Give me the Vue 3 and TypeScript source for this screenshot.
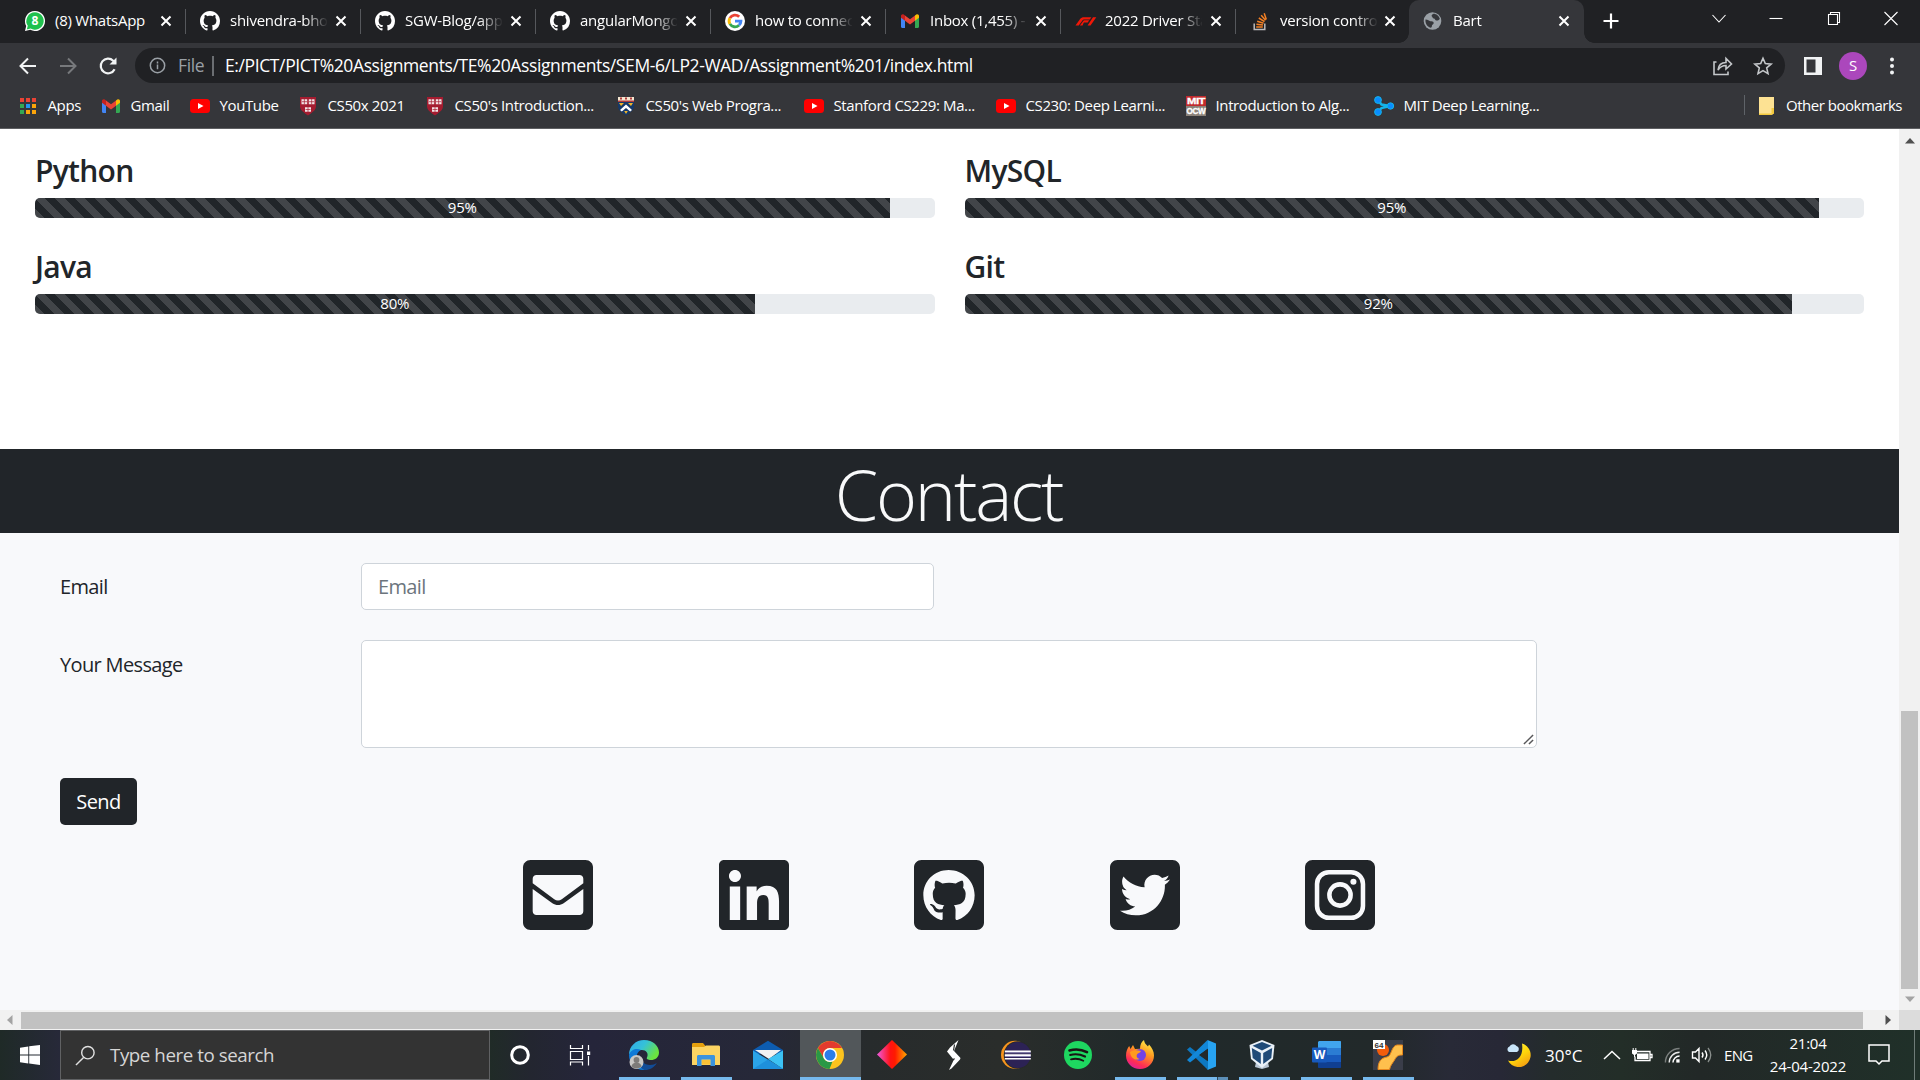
<script setup lang="ts">
interface Tab { icon: string; title: string; active?: boolean; last?: boolean }
interface Bookmark { icon: string; title: string; width: number }
interface Skill { name: string; value: number }
interface TaskApp { icon: string; running?: boolean; focused?: boolean; stacked?: boolean }

const github = '<path fill="#fff" transform="scale(1.25)" d="M8 0C3.58 0 0 3.58 0 8c0 3.54 2.29 6.53 5.47 7.59.4.07.55-.17.55-.38 0-.19-.01-.82-.01-1.49-2.01.37-2.53-.49-2.69-.94-.09-.23-.48-.94-.82-1.13-.28-.15-.68-.52-.01-.53.63-.01 1.08.58 1.23.82.72 1.21 1.87.87 2.33.66.07-.52.28-.87.51-1.07-1.78-.2-3.64-.89-3.64-3.95 0-.87.31-1.59.82-2.15-.08-.2-.36-1.02.08-2.12 0 0 .67-.21 2.2.82.64-.18 1.32-.27 2-.27s1.36.09 2 .27c1.53-1.04 2.2-.82 2.2-.82.44 1.1.16 1.92.08 2.12.51.56.82 1.27.82 2.15 0 3.07-1.87 3.75-3.65 3.95.29.25.54.73.54 1.48 0 1.07-.01 1.93-.01 2.2 0 .21.15.46.55.38A8.01 8.01 0 0 0 16 8c0-4.42-3.58-8-8-8z"/>'
const gmail = '<path fill="#4285f4" d="M1 5.5v10.3c0 .7.5 1.2 1.2 1.2H5V9z"/><path fill="#34a853" d="M19 5.500v10.300c0 .7-.5 1.200-1.200 1.200H15V9z"/><path fill="#ea4335" d="M5 4.500 10 8.300l5-3.800v5.200L10 13.400 5 9.700z"/><path fill="#fbbc04" d="M15 4.500l1.300-1C17.500 2.700 19 3.500 19 5v1.700l-4 3z"/><path fill="#c5221f" d="M5 4.500l-1.300-1C2.500 2.700 1 3.500 1 5v1.700l4 3z"/>'
const youtube = '<rect y="3" width="20" height="14" rx="3.500" fill="#f00"/><path fill="#fff" d="M8 7l5.500 3L8 13z"/>'
const shield = '<path fill="#a51c30" d="M2 1h16v9c0 4.500-4 6.500-8 9.500-4-3-8-5-8-9.500z"/><path fill="#f3e3e5" d="M3.500 3.200h5.700v5H3.500zM10.800 3.200h5.700v5h-5.700zM7 11.200h6v4.600H7z"/><path stroke="#a51c30" stroke-width=".7" d="M6.350 3v5.400M13.650 3v5.400M10 11v5M4 5.700h5M11 5.700h5M7.500 13.500h5"/>'

const icons: Record<string, string> = {
  github, gmail, youtube, shield,
  whatsapp: '<path fill="#fff" d="M10 0a10 10 0 1 1-4.700 18.800L0 20l1.200-5.100A10 10 0 0 1 10 0z"/><path fill="#1fc14e" d="M10 1.300a8.700 8.700 0 1 1-4.400 16.200l-3.800 1 1-3.700A8.700 8.700 0 0 1 10 1.300z"/><text x="10" y="14.300" text-anchor="middle" font-family="Open Sans, sans-serif" font-size="12" font-weight="700" fill="#fff">8</text>',
  google: '<circle cx="10" cy="10" r="10" fill="#fff"/><g fill="none" stroke-width="2.900"><path stroke="#ea4335" d="M4.900 7.100A5.900 5.900 0 0 1 14.200 5.800"/><path stroke="#fbbc05" d="M4.900 12.900a5.900 5.900 0 0 1 0-5.800"/><path stroke="#34a853" d="M14 14.300a5.900 5.900 0 0 1-9.100-1.400"/><path stroke="#4285f4" d="M10 10.100h5.900a5.900 5.900 0 0 1-1.900 4.200"/></g>',
  f1: '<path fill="#f01808" d="M.5 14.500l4.600-6.400C6 6.800 7.300 6.200 9 6.200h7.400l-1.600 2.300H9.400c-1 0-1.500.2-2 .9L3.700 14.500zM4.900 14.500l3-4.100c.6-.9 1.100-1.100 2.100-1.100h4.200l-1.500 2.100h-3c-.6 0-.8.1-1.100.5l-1 2.600zM12.600 14.500 18 6.200H21.300l-5.800 8.300z"/>',
  stack: '<path fill="none" stroke="#bcbbbb" stroke-width="1.500" d="M4.200 12.500v6h10.600v-6"/><g stroke="#f48024" stroke-width="1.500"><path d="M6.200 16h6.600M6.400 13.200l6.600.8M7.200 10.200l6.400 2M8.800 7l5.700 3.600M11.200 4.200l4.300 5M14.200 2.300l2.100 6.200"/></g>',
  globe: '<circle cx="9.500" cy="10" r="8.800" fill="#9aa0a6"/><path fill="#35363a" d="M10.500 2.800c3 0 5.500 2.300 6.300 5-.7 1.500-2.200 2.200-3.800 1.600-1-.4-.8-1.800-2.100-2-1.600-.1-1.200-1.400-2-1.900-.5-.5-.5-1.500 1.600-2.700zM2.500 8.600c2.700.2 3.300 1.400 4.900 1.700 1.300.1 2.900-.1 3.300 1.400.4 1.300-1.500 1.500-1.700 2.600-.1 1.300-.3 2.200-1.500 2.500C4.300 15.700 2 12.500 2.500 8.600z"/>',
  apps: '<path fill="#ea4335" d="M2 2h4v4H2zM8 2h4v4H8zM14 2h4v4h-4z"/><path fill="#34a853" d="M2 8h4v4H2zM2 14h4v4H2z"/><path fill="#2196f3" d="M8 8h4v4H8z"/><path fill="#fba40a" d="M14 8h4v4h-4zM8 14h4v4H8zM14 14h4v4h-4z"/>',
  crest: '<path fill="#15396b" d="M2 2h16v8c0 4.500-4 6.500-8 9.500C6 16.500 2 14.500 2 10z"/><path fill="#f5e6d0" d="M2 1h16v5H2z"/><path fill="#b03a3a" d="M2 4.500h16v1.400H2zM4 1.400h2v2H4zM9 1.400h2v2H9zM14 1.400h2v2h-2z"/><path fill="#f0b429" d="M3 7h5l-3 3zM12 7h5l-2 3zM8.200 15h3.600L10 18z"/><path fill="#fff" d="M10 8.500l6 5.500-1.800 1.600L10 12l-4.200 3.600L4 14z"/>',
  mit: '<path fill="#c12a2d" d="M0 0h20v10H0z"/><path fill="#8b8279" d="M0 10h20v10H0z"/><g font-family="Liberation Sans, sans-serif" font-weight="700" font-size="9" fill="#fff" stroke="#fff" stroke-width=".3"><text x="1" y="8.400" textLength="18" lengthAdjust="spacingAndGlyphs">MIT</text><text x=".5" y="18.300" textLength="19" lengthAdjust="spacingAndGlyphs">OCW</text></g>',
  nodes: '<path fill="none" stroke="#14b4e8" stroke-width="2.500" d="M4 4l3.500 4.500L16 10l-8.500 2L4 16"/><g fill="#0a8cff" stroke="#14b4e8"><circle cx="4" cy="4" r="3.400"/><circle cx="4" cy="16" r="3.400"/><circle cx="16.500" cy="10" r="3.200"/></g>',
  folder: '<path fill="#fde293" d="M2 1h15v12l-1 1v4.500H2z"/><path fill="#f3c93d" d="M17 12h-2.500v5.500L17 18zM2 17.500h13v1.500H2z"/>',

  edge: '<defs><linearGradient id="eg" x1="0" x2="1" y1="0" y2=".5"><stop offset="0" stop-color="#2fa8ee"/><stop offset=".5" stop-color="#35c1d8"/><stop offset="1" stop-color="#6be33e"/></linearGradient></defs><path fill="url(#eg)" d="M0 15C0 6 7 0 15 0c9 0 15 6 15 12.500 0 5-4 7.500-8 7.500-3 0-5-1-4-2.500 2-4-1-7.500-5-7.500C7 10 1 12 0 15z"/><path fill="#0f7ad8" d="M0 15C2 9 8 8 12 10c-3 1.500-4.500 4-4.500 7.500C7.500 23 12 27 17 29.800 7 31 0 24 0 15z"/><path fill="#124c96" d="M11 14.500c-1 6 4.500 10.500 10 10.500 3 0 5-.8 6.800-2C25 28 20 30.300 15.500 30 9 27.500 7 19 11 14.500z"/><circle cx="7.500" cy="22" r="7" fill="#c9c8c6"/><circle cx="7.500" cy="20" r="2.900" fill="#7d7b79"/><path fill="#7d7b79" d="M2.500 26.500a5 4 0 0 1 10 0 7 7 0 0 1-10 0z"/>',
  explorer: '<path fill="#e5a00d" d="M1 4.500C1 3.500 1.500 3 2.500 3H12l2.500 3H28v6H1z"/><path fill="#fcd462" d="M1 7h12l2-1.500h12.500c.8 0 1.500.5 1.500 1.500v18H1z"/><path fill="#3b93dd" d="M6 16.500c0-1 .7-1.500 1.500-1.500h15c.9 0 1.500.6 1.500 1.500V26h-4.500v-6.500h-9V26H6z"/><path fill="#fcc235" d="M11 20h8v4.500h-8z"/>',
  mail: '<path fill="#0d5cb0" d="M0 10 15 .8 30 10v4H0z"/><path fill="#f2f2f2" d="M2 10h26L16 19z"/><path fill="#2ba4e8" d="M0 10.500 30 29H0z"/><path fill="#3cc2f4" d="M30 10.500V29L15 19z"/><path fill="#1e90dc" d="M0 29l15-9.500L30 29z"/>',
  chrome: '<circle cx="15" cy="15" r="14" fill="#fcc31e"/><path fill="#e33b2e" d="M2.900 8A14 14 0 0 1 27.100 8H15a7 7 0 0 0-6 10.500z"/><path fill="#2a9846" d="M2.900 8l6.100 10.500a7 7 0 0 0 8.500 3.100L14.500 29A14 14 0 0 1 2.900 8z"/><circle cx="15" cy="15" r="7" fill="#fff"/><circle cx="15" cy="15" r="5.500" fill="#2b7de9"/>',
  diamond: '<defs><linearGradient id="dg"><stop offset="0" stop-color="#f05ae0"/><stop offset=".45" stop-color="#ff1212"/><stop offset=".6" stop-color="#ff1a00"/><stop offset="1" stop-color="#ffa800"/></linearGradient></defs><path fill="url(#dg)" d="M15 0l15 14.500L15 29 0 14.500z"/>',
  bolt: '<path fill="#fff" d="M20.500 0 12 7.500 9 11.500 15.500 19.500 15 21.500 11 30 13.500 28.500 22 19.500 22.500 18 16 11z"/><path fill="none" stroke="#2a2d2c" stroke-width="1.200" d="M15.500 10.500l1-6M14.500 20.500l2-2"/>',
  eclipse: '<circle cx="14" cy="14.800" r="14" fill="#f7941e"/><circle cx="16.500" cy="15" r="13.800" fill="#272a2a"/><circle cx="16.800" cy="15" r="13" fill="#2c2255"/><path fill="#fff" d="M3.800 10.500h26v1.800h-26zM3.800 14.200h26v1.800h-26zM3.800 18h26v1.600h-26z"/><path fill="#8d86b5" d="M3.800 12.300h26v1h-26zM3.800 16h26v1h-26z"/>',
  spotify: '<circle cx="15" cy="15" r="14" fill="#1ed760"/><g fill="none" stroke="#191414" stroke-linecap="round"><path stroke-width="2.600" d="M6.500 10.500c6-1.700 12-1.200 17.500 1.700"/><path stroke-width="2.200" d="M7.200 15c5-1.400 10-.8 14.800 1.600"/><path stroke-width="1.800" d="M8 19.300c4.500-1.100 8.500-.6 12.300 1.400"/></g>',
  firefox: '<defs><linearGradient id="fg" x1=".8" x2=".3" y1="0" y2="1"><stop offset="0" stop-color="#fff44f"/><stop offset=".4" stop-color="#ff9a1f"/><stop offset=".8" stop-color="#ff2c55"/><stop offset="1" stop-color="#e0209a"/></linearGradient></defs><path fill="url(#fg)" d="M15 29C7 29 1 23 1 15.500c0-4 1.500-7.500 3.200-9.500L5.500 9 8 5l2 4 5-.3c0-4 1.500-7 4-8.700.3 3 2 4.500 4 6.500l1-2c3 3 5 7 5 11C29 23 23 29 15 29z"/><circle cx="15" cy="15" r="6" fill="#7542e5"/><path fill="#ff9a1f" d="M5 12c3-2 7-2.500 11-1-1 2-3 2-4 3.500-1 1.500 0 4 2.500 4.500-5 2-9-1.500-9.500-7z"/>',
  vscode: '<path fill="#0d78c2" d="M1 9.500 4 7l19 15-1 8z"/><path fill="#1287d8" d="M1 20l3 2.500L24 7 21.500 0z"/><path fill="#27a3f2" d="M21.500 0 30 3.500v23L21.500 30 22 28V2z"/><path fill="#23292b" d="M21.500 9v12L13 15z"/>',
  vbox: '<path fill="#b9c6d4" d="M9 22h12l1 5-7 2-7-2z"/><path fill="#eaf1f8" d="M15 0l12.500 5-1.500 14-11 9L4 19 2.500 5z"/><path fill="#1f4a78" d="M15 2l9.500 3.700L15 10.500 5.500 5.700zM4.800 8l9 5v11L5.700 18zM25.200 8l-9 5v11l8.100-6z"/>',
  word: '<path fill="#41a5ee" d="M8 1h21c.6 0 1 .4 1 1v6H7V2z"/><path fill="#2b7cd3" d="M7 8h23v7H7z"/><path fill="#185abd" d="M7 15h23v7H7z"/><path fill="#103f91" d="M7 22h23v5c0 .6-.4 1-1 1H8c-.6 0-1-.4-1-1z"/><rect y="7.500" x="1" width="15" height="15" rx="1" fill="#185abd"/><text x="8.500" y="19.300" text-anchor="middle" font-family="Open Sans, sans-serif" font-size="12" font-weight="700" fill="#fff">W</text>',
  process: '<path fill="#3a3d49" d="M0 0h30v30H0z"/><circle cx="10" cy="10" r="6" fill="#f25c0c"/><path fill="#ffc04d" stroke="#e8861b" d="M29.500 5v10c-5 0-6 1.500-8 5s-4 5-5 9.500H5c0-8 3-11.500 9-12.500 5-1 4-11 10-12z"/><path fill="#fff" d="M0 0h12v9H0z"/><text x="6" y="7.600" text-anchor="middle" font-family="Liberation Sans, sans-serif" font-size="8" font-weight="700" fill="#333">64</text>',
}

const tabs: Tab[] = [
  { icon: 'whatsapp', title: '(8) WhatsApp' },
  { icon: 'github', title: 'shivendra-bho' },
  { icon: 'github', title: 'SGW-Blog/app' },
  { icon: 'github', title: 'angularMongo' },
  { icon: 'google', title: 'how to connec' },
  { icon: 'gmail', title: 'Inbox (1,455) -' },
  { icon: 'f1', title: '2022 Driver Sta' },
  { icon: 'stack', title: 'version contro', last: true },
  { icon: 'globe', title: 'Bart', active: true },
]

const bookmarks: Bookmark[] = [
  { icon: 'apps', title: 'Apps', width: 83 },
  { icon: 'gmail', title: 'Gmail', width: 89 },
  { icon: 'youtube', title: 'YouTube', width: 108 },
  { icon: 'shield', title: 'CS50x 2021', width: 127 },
  { icon: 'shield', title: "CS50's Introduction...", width: 191 },
  { icon: 'crest', title: "CS50's Web Progra...", width: 188 },
  { icon: 'youtube', title: 'Stanford CS229: Ma...', width: 192 },
  { icon: 'youtube', title: 'CS230: Deep Learni...', width: 190 },
  { icon: 'mit', title: 'Introduction to Alg...', width: 188 },
  { icon: 'nodes', title: 'MIT Deep Learning...', width: 180 },
]

const skills: Skill[] = [
  { name: 'Python', value: 95 },
  { name: 'MySQL', value: 95 },
  { name: 'Java', value: 80 },
  { name: 'Git', value: 92 },
]

const square = 'M400 32H48C21.500 32 0 53.500 0 80v352c0 26.500 21.500 48 48 48h352c26.500 0 48-21.500 48-48V80c0-26.500-21.500-48-48-48z'
const ring = { fill: 'none', stroke: '#f8f9fb' }
const socials: { name: string; body: string }[] = [
  { name: 'mail', body: `<path d="${square}"/><path fill="#f8f9fb" d="M86 128h276c13 0 24 11 24 24v28L248 283c-15 11-33 11-48 0L62 180v-28c0-13 11-24 24-24zM62 217l126 91c22 15 50 15 72 0l126-91v143c0 13-11 24-24 24H86c-13 0-24-11-24-24z"/>` },
  { name: 'linkedin', body: '<path d="M416 32H31.900C14.300 32 0 46.500 0 64.300v383.400C0 465.500 14.300 480 31.900 480H416c17.600 0 32-14.500 32-32.300V64.300c0-17.800-14.400-32.300-32-32.300zM135.400 416H69V202.200h66.500V416zm-33.200-243c-21.300 0-38.500-17.300-38.500-38.500S80.900 96 102.200 96c21.200 0 38.500 17.300 38.500 38.500 0 21.300-17.200 38.500-38.500 38.500zm282.100 243h-66.400V312c0-24.800-.5-56.700-34.500-56.700-34.600 0-39.900 27-39.900 54.900V416h-66.400V202.200h63.700v29.200h.9c8.900-16.800 30.600-34.500 62.900-34.500 67.200 0 79.700 44.300 79.700 101.900V416z"/>' },
  { name: 'github', body: '<path d="M400 32H48C21.500 32 0 53.500 0 80v352c0 26.500 21.500 48 48 48h352c26.500 0 48-21.500 48-48V80c0-26.500-21.500-48-48-48zM277.300 415.700c-8.400 1.500-11.500-3.700-11.500-8 0-5.400.2-33 .2-55.300 0-15.600-5.200-25.500-11.300-30.700 37-4.100 76-9.200 76-73.100 0-18.200-6.500-27.300-17.100-39 1.700-4.300 7.400-22-1.700-45-13.900-4.300-45.700 17.900-45.700 17.900-13.200-3.700-27.500-5.600-41.600-5.600-14.100 0-28.400 1.900-41.600 5.600 0 0-31.800-22.200-45.700-17.900-9.100 22.900-3.500 40.600-1.700 45-10.600 11.700-15.600 20.800-15.600 39 0 63.600 37.300 69 74.300 73.100-4.800 4.300-9.100 11.700-10.600 22.300-9.500 4.300-33.800 11.700-48.300-13.900-9.100-15.800-25.500-17.100-25.500-17.100-16.200-.2-1.100 10.200-1.100 10.200 10.800 5 18.400 24.200 18.400 24.200 9.700 29.700 56.100 19.700 56.100 19.700 0 13.900.2 36.500.2 40.600 0 4.300-3 9.500-11.500 8-66-22.100-112.200-84.900-112.200-158.300 0-91.800 70.200-161.500 162-161.500S388 165.600 388 257.400c.1 73.400-44.700 136.300-110.700 158.300z"/>' },
  { name: 'twitter', body: '<path d="M400 32H48C21.500 32 0 53.500 0 80v352c0 26.500 21.500 48 48 48h352c26.500 0 48-21.500 48-48V80c0-26.500-21.500-48-48-48zm-48.900 158.800c.2 2.800.2 5.700.2 8.500 0 86.700-66 186.600-186.600 186.600-37.200 0-71.700-10.800-100.700-29.400 5.300.6 10.400.8 15.800.8 30.700 0 58.900-10.400 81.400-28-28.800-.6-53-19.500-61.300-45.500 10.100 1.500 19.200 1.500 29.600-1.200-30-6.100-52.500-32.500-52.500-64.400v-.8c8.700 4.900 18.900 7.900 29.600 8.300a65.447 65.447 0 0 1-29.200-54.600c0-12.200 3.200-23.400 8.900-33.100 32.300 39.800 80.800 65.800 135.200 68.600-9.300-44.500 24-80.600 64-80.600 18.900 0 35.900 7.900 47.900 20.700 14.800-2.800 29-8.300 41.600-15.800-4.900 15.200-15.200 28-28.800 36.100 13.200-1.400 26-5.100 37.800-10.200-8.900 13.100-20.100 24.700-32.900 34z"/>' },
  { name: 'instagram', body: `<path d="${square}"/><rect x="77" y="110" width="294" height="292" rx="76" fill="${ring.fill}" stroke="${ring.stroke}" stroke-width="29"/><circle cx="224" cy="256" r="68" fill="${ring.fill}" stroke="${ring.stroke}" stroke-width="29"/><circle cx="310" cy="171" r="19.500" fill="${ring.stroke}"/>` },
]

const apps: TaskApp[] = [
  { icon: 'edge', running: true },
  { icon: 'explorer', running: true },
  { icon: 'mail' },
  { icon: 'chrome', focused: true },
  { icon: 'diamond' },
  { icon: 'bolt' },
  { icon: 'eclipse' },
  { icon: 'spotify' },
  { icon: 'firefox', running: true },
  { icon: 'vscode', running: true, stacked: true },
  { icon: 'vbox', running: true },
  { icon: 'word', running: true },
  { icon: 'process', running: true },
]
</script>

<template>
  <div class="screen">
    <header class="chrome">
      <div class="tabstrip">
        <div v-for="(tab, i) in tabs" :key="i" class="tab" :class="{ active: tab.active, last: tab.last }">
          <svg class="ico20" viewBox="0 0 20 20" v-html="icons[tab.icon]"></svg>
          <span class="tab-title">{{ tab.title }}</span>
          <svg class="tab-close" viewBox="0 0 12 12"><path d="M1.500 1.500l9 9M10.500 1.500l-9 9" stroke="#fff" stroke-width="2" /></svg>
        </div>
        <svg class="new-tab" viewBox="0 0 16 16"><path d="M8 .5v15M.5 8h15" stroke="#fff" stroke-width="2.200" /></svg>
        <div class="window-controls">
          <svg viewBox="0 0 20 20"><path d="M3.500 7l6.500 7 6.500-7" /></svg>
          <svg viewBox="0 0 20 20"><path d="M3.500 10.500h13" /></svg>
          <svg viewBox="0 0 20 20"><path d="M4.500 6.500h9v10h-9zM6.500 6.500v-2h9v10h-2" /></svg>
          <svg viewBox="0 0 20 20"><path d="M3.500 4l13 13M16.500 4l-13 13" /></svg>
        </div>
      </div>

      <div class="toolbar">
        <div class="nav">
          <svg viewBox="0 0 20 20"><path d="M18 10H3M10 2.500L2.500 10l7.500 7.500" stroke="#f1f3f4" /></svg>
          <svg viewBox="0 0 20 20"><path d="M2 10h15M10 2.500l7.500 7.500-7.500 7.500" stroke="#77797c" /></svg>
          <svg viewBox="0 0 20 20"><path d="M16.600 13.200A7.300 7.300 0 1 1 15.200 4.800L17.500 7" stroke="#f1f3f4" stroke-width="2.200" /><path d="M18.500 1.500v7h-7z" fill="#f1f3f4" stroke="none" /></svg>
        </div>
        <div class="omnibox">
          <svg class="info" viewBox="0 0 18 18"><circle cx="9" cy="9" r="7.600" /><path d="M9 8v5M9 4.800v2" /></svg>
          <span class="scheme">File</span>
          <i class="divider"></i>
          <span class="url">E:/PICT/PICT%20Assignments/TE%20Assignments/SEM-6/LP2-WAD/Assignment%201/index.html</span>
          <svg class="share" viewBox="0 0 20 20"><path d="M3.500 6H1v12.500h14v-3M5 14c.5-5 3-7.500 8-7.500V2.500L18.500 8 13 13V9.500c-4 0-6 1.500-8 4.500z" /></svg>
          <svg class="star" viewBox="0 0 20 20"><path d="M10 2.200l2.300 5.400 5.800.5-4.400 3.800 1.300 5.700-5-3-5 3 1.300-5.700L1.900 8.100l5.800-.5z" /></svg>
        </div>
        <svg class="panel" viewBox="0 0 18 18"><path fill="#f1f3f4" fill-rule="evenodd" d="M0 0h18v18H0zM2.500 2.500v13h9v-13z" /></svg>
        <span class="avatar">S</span>
        <svg class="dots" viewBox="0 0 6 18" fill="#f1f3f4"><circle cx="3" cy="2.500" r="2" /><circle cx="3" cy="9" r="2" /><circle cx="3" cy="15.500" r="2" /></svg>
      </div>

      <div class="bookmarks">
        <div v-for="(b, i) in bookmarks" :key="i" class="bookmark" :style="{ width: b.width + 'px' }">
          <svg class="ico20" viewBox="0 0 20 20" v-html="icons[b.icon]"></svg><span>{{ b.title }}</span>
        </div>
        <div class="bookmark other">
          <svg class="ico20" viewBox="0 0 20 20" v-html="icons.folder"></svg><span>Other bookmarks</span>
        </div>
      </div>
    </header>

    <div class="viewport">
      <main class="page">
        <section class="skills">
          <div v-for="s in skills" :key="s.name" class="skill">
            <h4>{{ s.name }}</h4>
            <div class="progress"><div class="bar" :style="{ width: s.value + '%' }"><span>{{ s.value }}%</span></div></div>
          </div>
        </section>
        <h1 class="banner">Contact</h1>
        <section class="contact">
          <div class="field">
            <label>Email</label>
            <input class="control email" type="email" placeholder="Email" />
          </div>
          <div class="field">
            <label class="tall">Your Message</label>
            <div class="message">
              <textarea class="control"></textarea>
              <svg class="grip" viewBox="0 0 12 12"><path d="M1 11L11 1M6.500 11L11 6.500" stroke="#58585a" stroke-width="1.600" /></svg>
            </div>
          </div>
          <button class="send">Send</button>
          <div class="socials">
            <svg v-for="s in socials" :key="s.name" viewBox="0 32 448 448" fill="#212529" v-html="s.body"></svg>
          </div>
        </section>
      </main>
      <div class="vscroll">
        <svg viewBox="0 0 10 6"><path fill="#505050" d="M5 0l5 5.500H0z" /></svg>
        <i></i>
        <svg viewBox="0 0 10 6"><path fill="#a3a3a3" d="M0 .5h10L5 6z" /></svg>
      </div>
    </div>
    <div class="hscroll">
      <div class="track">
        <svg viewBox="0 0 6 10"><path fill="#a3a3a3" d="M5.500 0v10L0 5z" /></svg>
        <i></i>
        <svg viewBox="0 0 6 10"><path fill="#505050" d="M.5 0v10L6 5z" /></svg>
      </div>
    </div>

    <footer class="taskbar">
      <div class="start">
        <svg viewBox="0 0 20 20" fill="#fff"><path d="M0 2.700l8.300-1.200v8H0zM9.200 1.300L20 0v9.500H9.200zM0 10.400h8.300v8L0 17.200zM9.200 10.400H20V20L9.200 18.600z" /></svg>
      </div>
      <div class="search">
        <svg viewBox="0 0 22 22"><circle cx="13.500" cy="8" r="6.500" /><path d="M9 13L1 21" /></svg>
        <span>Type here to search</span>
      </div>
      <div class="sys"><svg class="s24" viewBox="0 0 24 24"><circle cx="12" cy="12" r="8.300" fill="none" stroke="#fff" stroke-width="3" /></svg></div>
      <div class="sys view"><svg class="s24" viewBox="0 0 24 24"><path d="M2.500 2v3.500h12V2M2.500 8.500h12v8h-12zM2.500 22.500v-3.500h12v3.500M20.500 2v5M20.500 13v9.500" fill="none" stroke="#fff" stroke-width="1.200" /><path fill="#fff" d="M19 8.500h3.200V12H19z" /></svg></div>
      <div class="apps">
        <div v-for="a in apps" :key="a.icon" class="app" :class="['app-' + a.icon, { running: a.running, focused: a.focused, stacked: a.stacked }]">
          <svg viewBox="0 0 30 30" v-html="icons[a.icon]"></svg>
        </div>
      </div>
      <div class="tray">
        <svg class="moon" viewBox="0 0 26 26"><defs><linearGradient id="mg" x1="0" x2=".6" y1="0" y2="1"><stop offset="0" stop-color="#fff04a" /><stop offset=".6" stop-color="#ffd60a" /><stop offset="1" stop-color="#f5a312" /></linearGradient></defs><path fill="url(#mg)" d="M16 1.500A12 12 0 1 1 2 18.500c8 2.500 16-3 14-17z" /><path fill="#c9e6fa" d="M3 10a3 3 0 0 1 .5-5.500A4 4 0 0 1 10.500 4 3.200 3.200 0 0 1 11 10z" /></svg>
        <span class="temp">30°C</span>
        <svg class="caret" viewBox="0 0 18 10"><path d="M1 9l8-7.500L17 9" fill="none" stroke="#fff" stroke-width="1.500" /></svg>
        <svg class="battery" viewBox="0 0 22 16"><path d="M5 4.500h14v9H4V9.500M19.500 7.500h1.500v3h-1.500" fill="none" stroke="#fff" stroke-width="1.300" /><path fill="#fff" d="M6 6.500h11.500v5.500H6zM1 3h5v3.500L4 8v2H3V8L1 6.500zM1.700 1h1v2h-1zM4.300 1h1v2h-1z" /></svg>
        <svg class="wifi" viewBox="0 0 18 18"><g fill="none" stroke="#fff" stroke-width="1.500"><path d="M1.500 16.500a15 15 0 0 1 15-15" opacity=".4" /><path d="M5.500 16.500a11 11 0 0 1 11-11" opacity=".9" /><path d="M9.500 16.500a7 7 0 0 1 7-7" /></g><path fill="#fff" d="M13 13h3.500v3.500H13z" /></svg>
        <svg class="speaker" viewBox="0 0 22 18"><path d="M1.500 6h3L8 2.500v13L4.500 12h-3zM11 6.500q2 2.500 0 5M14 4.500q3.500 4.500 0 9" fill="none" stroke="#fff" stroke-width="1.400" /><path d="M17 2q5.500 7 0 14" fill="none" stroke="#8a8f8d" stroke-width="1.300" /></svg>
        <span class="lang">ENG</span>
        <div class="clock"><span>21:04</span><span>24-04-2022</span></div>
        <svg class="notes" viewBox="0 0 22 22"><path d="M1 2h20v16h-7l-3 3-3-3H1z" fill="none" stroke="#fff" stroke-width="1.500" /></svg>
      </div>
      <div class="peek"></div>
    </footer>
  </div>
</template>

<style>
body { margin: 0; overflow: hidden; }
</style>

<style scoped>
* { box-sizing: border-box; }
.screen { width: 1920px; height: 1080px; display: flex; flex-direction: column; overflow: hidden; background: #fff; color: #212529; font-family: "Open Sans", "Noto Sans", sans-serif; }
svg { display: block; flex: none; overflow: visible; }
.ico20 { width: 20px; height: 20px; }

/* browser frame */
.chrome { height: 129px; background: #35363a; border-bottom: 1px solid #5e5f62; flex: none; color: #fff; }
.tabstrip { height: 43px; background: #202124; display: flex; padding-left: 11px; align-items: flex-start; }
.tab { width: 175px; height: 43px; padding: 0 0 1px 14px; display: flex; align-items: center; position: relative; flex: none; }
.tab::after { content: ""; width: 1px; height: 25px; background: #56585c; position: absolute; right: 0; top: 9px; }
.tab.last { width: 173px; }
.tab.last::after, .tab.active::after { display: none; }
.tab.last .tab-title { margin-right: 7px; }
.tab.active { background: #35363a; border-radius: 10px 10px 0 0; }
.tab.active::before { content: ""; position: absolute; left: -10px; right: -10px; bottom: 0; height: 10px; background: radial-gradient(circle at 0 0, transparent 9.500px, #35363a 10px) left / 10px 10px no-repeat, radial-gradient(circle at 100% 0, transparent 9.500px, #35363a 10px) right / 10px 10px no-repeat; }
.tab-title { width: 97px; margin: 0 8px 0 10px; padding-bottom: 2px; font-size: 15px; letter-spacing: -0.250px; white-space: nowrap; -webkit-mask-image: linear-gradient(90deg, #000 74px, transparent 98px); mask-image: linear-gradient(90deg, #000 74px, transparent 98px); }
.tab:first-child .tab-title { -webkit-mask-image: none; mask-image: none; }
.tab-close { width: 12px; height: 12px; }
.new-tab { width: 16px; height: 16px; margin: 13px 0 0 19px; }
.window-controls { display: flex; gap: 37.500px; margin: 8px 19px 0 auto; }
.window-controls svg { width: 20px; height: 20px; fill: none; stroke: #fff; stroke-width: 1.100; }

.toolbar { height: 45px; display: flex; align-items: center; }
.nav { display: flex; gap: 20px; width: 135px; padding-left: 17.500px; flex: none; }
.nav svg { width: 20px; height: 20px; fill: none; stroke-width: 2; }
.omnibox { width: 1650px; height: 35px; border-radius: 18px; background: #202124; display: flex; align-items: center; padding-left: 14px; flex: none; font-size: 17.500px; }
.info { width: 17px; height: 17px; fill: none; stroke: #9aa0a6; stroke-width: 1.600; }
.scheme { width: 34px; margin-left: 12px; padding-bottom: 1.500px; color: #9aa0a6; letter-spacing: -0.400px; }
.divider { width: 2px; height: 20px; background: #6b6e72; }
.url { margin-left: 11px; padding-bottom: 1.500px; letter-spacing: -0.388px; white-space: nowrap; }
.share, .star { width: 20px; height: 20px; fill: none; stroke: #c4c7ca; stroke-width: 1.600; }
.share { margin-left: auto; }
.star { margin: 0 12.500px 0 20px; }
.panel { width: 18px; height: 18px; margin-left: 19px; }
.avatar { width: 28px; height: 28px; margin-left: 17px; border-radius: 50%; background: #ab47bc; font-size: 15px; line-height: 27px; text-align: center; }
.dots { width: 6px; height: 18px; margin-left: 22px; }

.bookmarks { height: 36px; display: flex; align-items: center; padding-left: 18px; font-size: 15px; letter-spacing: -0.380px; }
.bookmark { display: flex; align-items: center; flex: none; white-space: nowrap; }
.bookmark span { margin-left: 9.500px; padding-bottom: 3px; }
.other { margin-left: auto; margin-right: 18px; padding-left: 13px; position: relative; letter-spacing: -0.480px; }
.other::before { content: ""; width: 1px; height: 20px; background: #5f6368; position: absolute; left: 0; top: 0; }

/* page */
.viewport { height: 881px; display: flex; flex: none; }
.page { width: 1899px; background: #f8f9fb; }
.skills { height: 320px; padding: 24px 35px 0; background: #fff; display: grid; grid-template-columns: 1fr 1fr; grid-auto-rows: 65px; gap: 31px 30px; }
h4 { margin: 0 0 9px; font-size: 30px; line-height: 36px; font-weight: 550; letter-spacing: -0.700px; }
.progress { height: 20px; border-radius: 5px; background: #e9ecef; overflow: hidden; }
.bar { height: 20px; color: #fff; font-size: 15px; line-height: 19px; text-align: center; letter-spacing: -0.200px; background: linear-gradient(45deg, rgba(255, 255, 255, .15) 25%, transparent 25%, transparent 50%, rgba(255, 255, 255, .15) 50%, rgba(255, 255, 255, .15) 75%, transparent 75%, transparent) 0 0 / 20px 20px #212529; }
.banner { margin: 0; height: 84px; padding: 5px 2px 0 0; background: #212529; color: #f8f9fa; font-size: 70px; font-weight: 300; line-height: 81px; letter-spacing: -2.200px; text-align: center; }
.contact { padding: 30px 60px 0; font-size: 20px; letter-spacing: -0.650px; }
.field { display: flex; margin-bottom: 30px; }
label { width: 301px; line-height: 47px; }
label.tall { line-height: 49px; }
.control { display: block; border: 1px solid #ced4da; border-radius: 5px; background: #fff; font: inherit; letter-spacing: inherit; padding: 0 16px; outline: none; }
.email { width: 573px; height: 47px; }
.email::placeholder { color: #6c757d; opacity: 1; }
.message { position: relative; }
textarea.control { width: 1176px; height: 108px; resize: none; }
.grip { position: absolute; right: 3px; bottom: 3px; width: 11px; height: 11px; }
.send { display: block; width: 77px; height: 47px; border: 0; border-radius: 5px; background: #212529; color: #fff; font: inherit; letter-spacing: -0.550px; padding: 0; }
.socials { display: flex; justify-content: center; gap: 125.500px; margin: 35px .4px 0 0; }
.socials svg { width: 70px; height: 70px; }

.vscroll { width: 21px; background: #f1f1f1; display: flex; flex-direction: column; align-items: center; }
.vscroll svg { width: 10px; height: 6px; margin-top: 9px; }
.vscroll i { width: 17px; height: 278px; margin-top: 567px; background: #c1c1c1; }
.vscroll svg:last-child { margin-top: 7px; }
.hscroll { height: 20px; background: #dcdcdc; flex: none; }
.track { width: 1899px; height: 20px; background: #f1f1f1; display: flex; align-items: center; }
.track svg { width: 6px; height: 10px; margin-left: 7px; }
.track i { width: 1842px; height: 17px; margin: 1px 0 0 8px; background: #c1c1c1; }
.track svg:last-child { margin-left: 22px; }

/* taskbar */
.taskbar { height: 50px; flex: none; display: flex; color: #fff; background: linear-gradient(90deg, #1f2a27 0, #272939 60px, #202b27 490px, #232630 530px, #25253a 590px, #262838 760px, #272b2c 870px, #2a2d2b 1000px, #20292a 1150px, #22292a 1380px, #282a37 1450px, #272836 1500px, #242c2c 1550px, #232e28 1620px, #222827 1700px, #203029 1914px); }
.start { width: 60px; display: flex; align-items: center; padding-left: 20px; }
.start svg { width: 20px; height: 20px; }
.search { width: 430px; background: #333; border: 1px solid #606163; display: flex; align-items: center; padding-left: 14px; color: #d6d6d6; font-size: 18.750px; letter-spacing: -0.450px; }
.search svg { width: 21px; height: 21px; fill: none; stroke: #e0e0e0; stroke-width: 1.500; margin-right: 14px; }
.search span { padding-bottom: 2px; }
.sys { width: 60px; display: flex; align-items: center; justify-content: center; }
.view { padding-right: 1px; }
.s24 { width: 24px; height: 24px; }
.apps { display: flex; margin-left: 4px; }
.app { width: 61px; margin-right: 1px; padding-right: 1px; display: flex; align-items: center; justify-content: center; position: relative; }
.app svg { width: 30px; height: 30px; }
.app-bolt, .app-vscode { padding-right: 3px; }
.app-vbox { padding-right: 5px; }
.app::after { content: ""; position: absolute; left: 5px; bottom: 0; width: 51px; height: 3px; }
.running::after { background: #76b9ed; }
.stacked::after { background: linear-gradient(90deg, #76b9ed 40px, #2f4658 40px, #2f4658 41px, #5c8fb7 41px); }
.focused { background: #52575a; }
.focused::after { background: #76b9ed; left: 0; width: 61px; }
.tray { display: flex; align-items: center; margin-left: 86px; font-size: 15px; flex: none; }
.moon { width: 26px; height: 26px; }
.temp { width: 58px; margin-left: 13px; font-size: 17px; padding-top: 1px; }
.caret { width: 18px; height: 10px; }
.battery { width: 22px; height: 16px; margin-left: 10px; }
.wifi { width: 17px; height: 17px; margin-left: 11px; }
.speaker { width: 22px; height: 18px; margin-left: 10px; }
.lang { margin-left: 11px; width: 44px; letter-spacing: -0.700px; }
.clock { width: 80px; display: flex; flex-direction: column; align-items: center; line-height: 23px; letter-spacing: -0.200px; }
.notes { width: 22px; height: 22px; margin: 0 0 2px 20px; }
.peek { width: 6px; margin-left: auto; border-left: 1px solid #6f7c78; flex: none; }
</style>
